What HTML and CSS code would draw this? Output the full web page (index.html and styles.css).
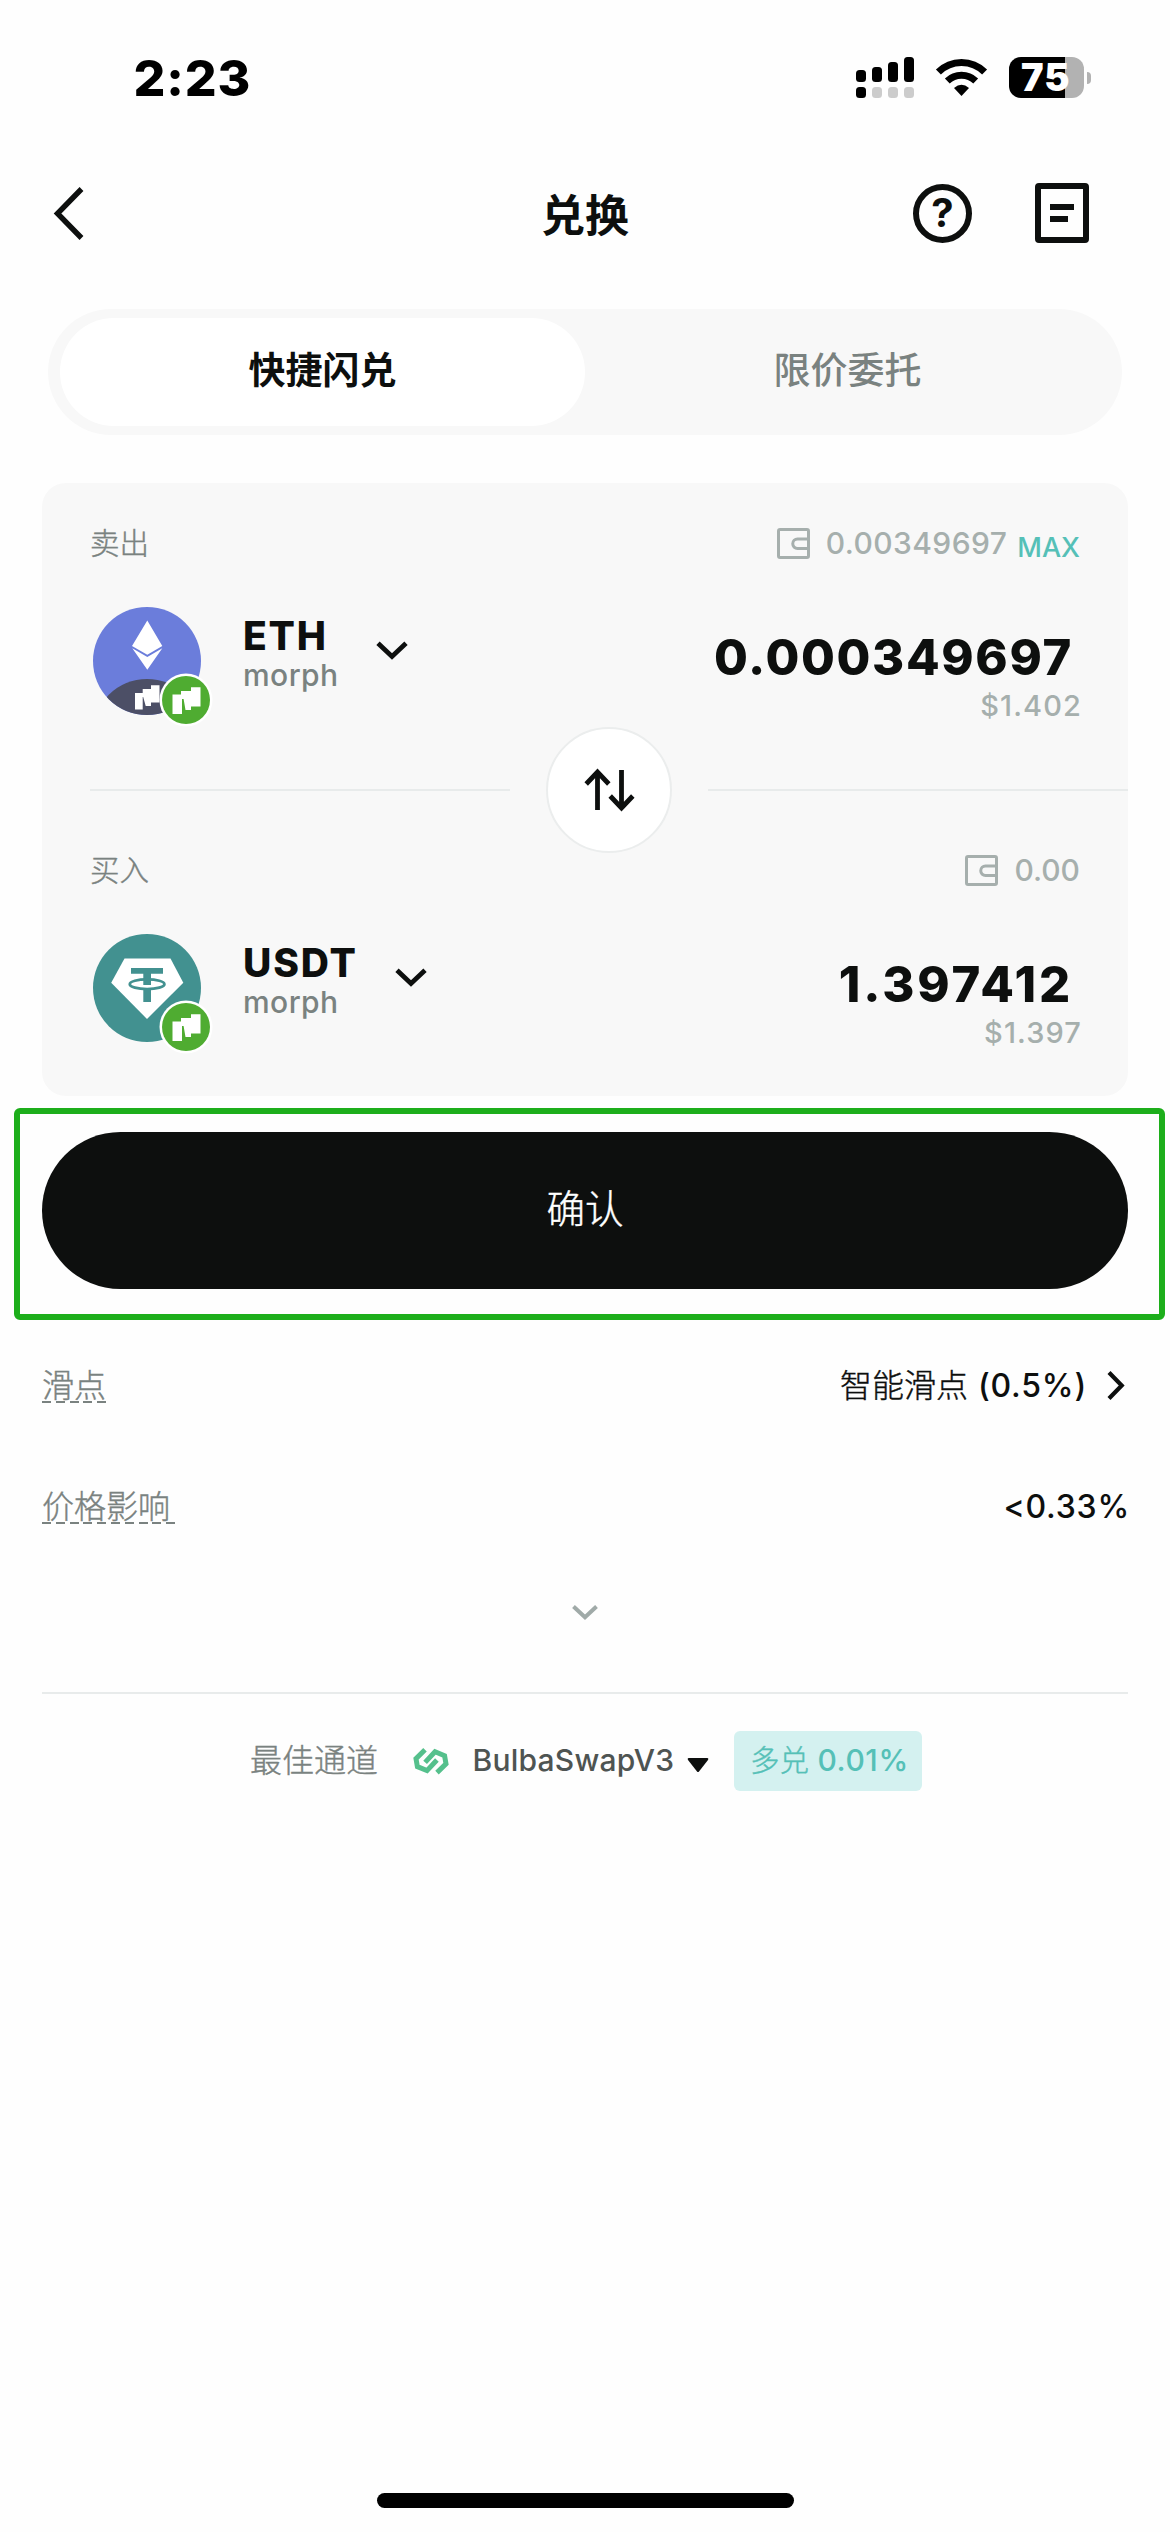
FILE: index.html
```html
<!DOCTYPE html>
<html lang="zh-CN">
<head>
<meta charset="utf-8">
<title>兑换</title>
<link rel="stylesheet" href="styles.css">
</head>
<body>
<svg class="defs" width="0" height="0" aria-hidden="true">
  <symbol id="wallet" viewBox="0 0 33 31">
    <rect x="1.5" y="1.5" width="30" height="28" rx="1.5" fill="none" stroke="currentColor" stroke-width="3"/>
    <path d="M31.5 11H20.5A4.6 4.6 0 0 0 20.5 20.5H31.5" fill="none" stroke="currentColor" stroke-width="3"/>
  </symbol>
  <symbol id="chevron" viewBox="0 0 32 19">
    <path d="M2 2.2L16 15.4L30 2.2" fill="none" stroke="currentColor" stroke-width="4.8"/>
  </symbol>
  <symbol id="morph" viewBox="0 0 54 54">
    <circle cx="27" cy="27" r="26.5" fill="#fff"/>
    <circle cx="27" cy="27" r="24" fill="#4fac31"/>
    <path d="M13.5 21.5H22V18H32V14.2H41.5V33.5H32V37H26.5L24.6 26H23V41H13.5Z" fill="#fff"/>
  </symbol>
</svg>

<header class="status">
  <span class="time">2:23</span>
  <div class="status-icons">
    <svg width="58" height="41" viewBox="0 0 58 41">
      <rect x="0" y="13" width="10" height="12" rx="3.5"/>
      <rect x="16" y="10" width="10" height="15" rx="3.5"/>
      <rect x="32" y="5" width="10" height="20" rx="3.5"/>
      <rect x="48" y="0" width="10" height="25" rx="3.5"/>
      <rect x="0" y="30" width="10" height="11" rx="3.5"/>
      <g fill="#ccc">
        <rect x="16" y="30" width="10" height="11" rx="3.5"/>
        <rect x="32" y="30" width="10" height="11" rx="3.5"/>
        <rect x="48" y="30" width="10" height="11" rx="3.5"/>
      </g>
    </svg>
    <svg class="wifi" width="51" height="37" viewBox="0 0 51 37">
      <path d="M2.4 13A32.6 32.6 0 0 1 48.6 13M11.3 22A20.6 20.6 0 0 1 39.7 22" fill="none" stroke="#000" stroke-width="7"/>
      <path d="M18 29Q25.5 22.5 33 29L25.5 37Z"/>
    </svg>
    <div class="battery"><span>75</span></div>
    <i class="battery-nub"></i>
  </div>
</header>

<nav class="nav">
  <svg class="back" width="30" height="53" viewBox="0 0 30 53"><path d="M27.5 2L3.5 26.5L27.5 51" fill="none" stroke="#0d0f0e" stroke-width="5.4"/></svg>
  <h1>兑换</h1>
  <div class="nav-actions">
    <span class="help">?</span>
    <svg width="54" height="60" viewBox="0 0 54 60"><rect x="3" y="3" width="48" height="54" rx="1" fill="none" stroke="#0d0f0e" stroke-width="6"/><path d="M15 24H39M15 36H33" stroke="#0d0f0e" stroke-width="6"/></svg>
  </div>
</nav>

<div class="tabs">
  <span class="tab active">快捷闪兑</span>
  <span class="tab">限价委托</span>
</div>

<main class="card">
  <div class="side-head">
    <span class="side-label">卖出</span>
    <span class="balance"><svg width="33" height="31"><use href="#wallet"/></svg><span class="bal-num wide">0.00349697</span><span class="max">MAX</span></span>
  </div>
  <div class="token-row">
    <div class="token-icon">
      <svg width="108" height="108" viewBox="0 0 108 108">
        <clipPath id="disc"><circle cx="54" cy="54" r="54"/></clipPath>
        <g clip-path="url(#disc)">
          <rect width="108" height="108" fill="#6b7ddb"/>
          <circle cx="54" cy="126" r="54" fill="#4c4f66"/>
        </g>
        <path d="M54.3 13.5L69.3 39L54.3 47.8L39 39ZM39.3 41.3L54.3 50L69.3 41.3L54.3 62.8Z" fill="#fff"/>
        <path d="M42 86H49.7V82H58V78.3H66.5V95.5H58V99H52.7L50.2 90H49.7V102.5H42Z" fill="#fff"/>
      </svg>
      <svg class="badge" width="54" height="54"><use href="#morph"/></svg>
    </div>
    <div class="token-name"><strong>ETH</strong><span>morph</span></div>
    <svg class="chev" width="32" height="19"><use href="#chevron"/></svg>
    <div class="amount"><strong>0.000349697</strong><span>$1.402</span></div>
  </div>
  <div class="swap">
    <i></i>
    <div class="swap-btn">
      <svg width="50" height="44" viewBox="0 0 50 44"><path d="M13.5 42V5.5M2.2 16L13.5 4L24.8 16M37.5 2V38.5M26.2 28L37.5 40L48.8 28" fill="none" stroke="#0d0f0e" stroke-width="4.8"/></svg>
    </div>
    <i></i>
  </div>
  <div class="side-head">
    <span class="side-label">买入</span>
    <span class="balance"><svg width="33" height="31"><use href="#wallet"/></svg><span class="bal-num">0.00</span></span>
  </div>
  <div class="token-row">
    <div class="token-icon">
      <svg width="108" height="108" viewBox="0 0 108 108">
        <circle cx="54" cy="54" r="54" fill="#429190"/>
        <path d="M31.5 24.5H77.5L90.3 48.7L54 85L18.2 48.7Z" fill="#fff"/>
        <path d="M38 34H70V39.7H58V51H50.3V39.7H38Z" fill="#429190"/>
        <ellipse cx="54.1" cy="50.2" rx="17.3" ry="4.9" fill="none" stroke="#429190" stroke-width="2.8"/>
        <path d="M50.3 56H58V68H50.3Z" fill="#429190"/>
      </svg>
      <svg class="badge" width="54" height="54"><use href="#morph"/></svg>
    </div>
    <div class="token-name"><strong>USDT</strong><span>morph</span></div>
    <svg class="chev" width="32" height="19"><use href="#chevron"/></svg>
    <div class="amount buy"><strong>1.397412</strong><span>$1.397</span></div>
  </div>
</main>

<div class="highlight"><div class="confirm">确认</div></div>

<section class="details">
  <div class="detail">
    <span class="hint">滑点</span>
    <span class="value"><span class="mode">智能滑点</span><b>(0.5%)</b><svg width="18" height="29" viewBox="0 0 18 29"><path d="M2 1.5L14.7 14.5L2 27.5" fill="none" stroke="#0d0f0e" stroke-width="4.2"/></svg></span>
  </div>
  <div class="detail">
    <span class="hint long">价格影响</span>
    <b class="impact">&lt;0.33%</b>
  </div>
  <svg class="expand" width="26" height="15" viewBox="0 0 26 15"><path d="M1.5 1.5L13 12.3L24.5 1.5" fill="none" stroke="#a0aaa8" stroke-width="4"/></svg>
</section>

<footer class="route">
  <span class="route-label">最佳通道</span>
  <svg class="dex" width="36" height="25" viewBox="0 0 36 25"><g fill="none" stroke="#55c08c" stroke-width="5"><path d="M12 .8L3 9.6L4.4 17.6L14 21.6L23.9 11"/><path d="M24 23.6L33 14.8L31.6 6.8L22 2.8L12.1 13.4"/></g></svg>
  <span class="dex-name">BulbaSwapV3</span>
  <svg class="tri" width="22" height="15" viewBox="0 0 22 15"><path d="M1.5 0H20.5Q22 .5 21 2L12 13.5Q11 14.7 10 13.5L1 2Q0 .5 1.5 0Z" fill="#0d0f0e"/></svg>
  <span class="tag"><span class="tag-label">多兑</span><b>0.01%</b></span>
</footer>

<div class="home"></div>
</body>
</html>
```
FILE: styles.css
```css
* { box-sizing: border-box; }

body {
  margin: 0;
  width: 1170px;
  height: 2532px;
  display: flex;
  flex-direction: column;
  background: #fefefe;
  color: #0d0f0e;
  font-family: "Inter", "Noto Sans CJK SC", sans-serif;
  overflow: hidden;
}

svg { display: block; flex: none; overflow: visible; }
.defs { position: absolute; }
b { font-weight: 500; }

/* light Chinese labels, slightly thickened */
.side-label, .confirm, .hint, .mode, .route-label, .tag-label {
  font-weight: 300;
  -webkit-text-stroke: .4px currentColor;
}

/* status bar */
.status {
  height: 155px;
  padding: 0 79px 0 133.5px;
  display: flex;
  align-items: center;
  justify-content: space-between;
  color: #000;
}
.time { font-size: 50px; font-weight: 800; letter-spacing: .9px; line-height: 60px; }
.status-icons { display: flex; align-items: center; }
.wifi { margin: 0 22px; }
.battery {
  width: 75px;
  height: 41px;
  border-radius: 12px;
  background: linear-gradient(90deg, #000 56px, #b2b2b2 56px);
  display: flex;
  align-items: center;
  padding-left: 12px;
}
.battery span { color: #fff; font-size: 38px; font-weight: 900; line-height: 41px; letter-spacing: 1px; }
.battery-nub {
  width: 4px;
  height: 12px;
  margin-left: 3px;
  border-radius: 0 5px 5px 0;
  background: #b2b2b2;
}

/* title bar */
.nav {
  height: 116px;
  padding: 0 81px 0 54px;
  display: grid;
  grid-template-columns: 1fr auto 1fr;
  align-items: center;
}
.nav h1 { margin: 5px 0 0 27px; font-size: 44px; font-weight: 600; line-height: 60px; }
.nav-actions { display: flex; align-items: center; justify-content: flex-end; gap: 63px; }
.help {
  width: 59px;
  height: 59px;
  border: 6px solid #0d0f0e;
  border-radius: 50%;
  font-size: 40px;
  font-weight: 700;
  line-height: 46px;
  text-align: center;
}

/* segmented tabs */
.tabs {
  height: 126px;
  margin: 38px 48px 0;
  padding: 9px 12px;
  border-radius: 63px;
  background: #f8f8f8;
  display: flex;
}
.tab {
  flex: 1;
  border-radius: 54px;
  color: #7a8280;
  font-size: 37px;
  font-weight: 500;
  line-height: 105px;
  text-align: center;
}
.tab.active { background: #fff; color: #0d0f0e; font-weight: 600; }

/* swap card */
.card {
  height: 613px;
  margin: 48px 42px 0;
  padding: 40px 0 0 48px;
  border-radius: 24px;
  background: #f8f8f8;
}
.side-head {
  height: 40px;
  margin-bottom: 44px;
  padding-right: 48px;
  display: flex;
  align-items: center;
  justify-content: space-between;
}
.side-label { color: #7a8280; font-size: 29.5px; line-height: 40px; }
.balance { display: flex; align-items: center; color: #a6afad; }
.bal-num { margin-left: 16px; font-size: 30px; font-weight: 500; line-height: 38px; }
.bal-num.wide { letter-spacing: .42px; }
.max {
  margin: 9px 0 0 10px;
  color: #55c0b7;
  font-size: 27px;
  font-weight: 500;
  line-height: 38px;
}
.token-row {
  height: 108px;
  padding: 0 46px 0 3px;
  display: flex;
  align-items: flex-start;
}
.token-icon { position: relative; width: 108px; height: 108px; }
.badge { position: absolute; left: 66px; top: 66px; }
.token-name { margin: 9px 0 0 42px; display: flex; flex-direction: column; }
.token-name strong { font-size: 39px; font-weight: 800; line-height: 40px; letter-spacing: 1.8px; }
.token-name span { color: #7a8280; font-size: 30px; font-weight: 500; line-height: 38px; letter-spacing: .43px; }
.chev { margin: 34px 0 0 37px; }
.amount {
  margin: 23px 0 0 auto;
  display: flex;
  flex-direction: column;
  align-items: flex-end;
}
.amount strong { margin-right: 9px; font-size: 49px; font-weight: 800; line-height: 56px; letter-spacing: 1.65px; }
.amount span { color: #a6afad; font-size: 29px; font-weight: 500; line-height: 40px; letter-spacing: 1.1px; }
.amount.buy strong { letter-spacing: 2.8px; }
.swap {
  height: 120px;
  margin: 15px 0 0;
  display: flex;
  align-items: center;
}
.swap i { width: 420px; height: 1.5px; background: #e8ebeb; }
.swap-btn {
  width: 126px;
  height: 126px;
  margin: 0 36px;
  border: 2px solid #ebeded;
  border-radius: 50%;
  background: #fff;
  display: grid;
  place-items: center;
}

/* primary action */
.highlight {
  width: 1151px;
  height: 212px;
  margin: 12px 0 0 14px;
  padding: 18px 31px 25px 22px;
  border: 6px solid #1dae1b;
  border-radius: 6px;
}
.confirm {
  height: 157px;
  border-radius: 79px;
  background: #0d0f0e;
  color: #fff;
  font-size: 38.5px;
  line-height: 155px;
  text-align: center;
}

/* trade details */
.details {
  height: 374px;
  margin: 0 42px;
  padding-top: 43px;
  display: flex;
  flex-direction: column;
  border-bottom: 2px solid #e8ebeb;
}
.detail {
  height: 44px;
  margin-bottom: 77px;
  display: flex;
  align-items: center;
  justify-content: space-between;
  font-size: 32px;
  line-height: 44px;
}
.hint {
  color: #7a8280;
  padding-top: 2px;
  background: repeating-linear-gradient(90deg, #7a8280 0 9px, transparent 9px 13.8px) 0 39px / 100% 2px no-repeat;
}
.hint.long { padding-right: 5px; }
.value { display: flex; align-items: center; padding-top: 1px; }
.value b { margin: 0 20px 0 10px; letter-spacing: .8px; }
.value svg { margin-right: 3px; }
.impact { margin-right: -2px; padding-top: 1px; letter-spacing: .77px; }
.expand { align-self: center; }

/* route */
.route {
  height: 60px;
  margin-top: 37px;
  padding-left: 250px;
  display: flex;
  align-items: center;
  line-height: 40px;
}
.route-label { padding-bottom: 1px; color: #7a8280; font-size: 32px; }
.dex { margin-left: 35px; }
.dex-name { margin-left: 23.5px; padding-bottom: 3px; color: #4e5452; font-size: 30px; font-weight: 500; letter-spacing: .22px; }
.tri { margin: 8px 25px 0 12.5px; }
.tag {
  width: 188px;
  height: 60px;
  padding: 0 0 3px 16px;
  border-radius: 6px;
  background: #d4f1f0;
  color: #55c0b7;
  display: flex;
  align-items: center;
  font-size: 29.5px;
}
.tag b { margin-left: 8.5px; font-size: 30px; letter-spacing: .58px; }

/* home indicator */
.home {
  width: 417px;
  height: 15px;
  margin: auto auto 24px 377px;
  border-radius: 8px;
  background: #000;
}
```
